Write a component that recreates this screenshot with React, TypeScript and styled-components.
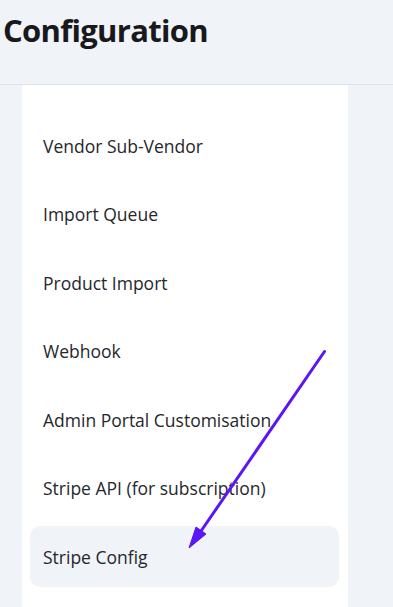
import React from "react";
import styled, { createGlobalStyle } from "styled-components";

const Global = createGlobalStyle`
  html, body { margin: 0; padding: 0; }
  body {
    background: #f0f3f8;
    font-family: "Open Sans", "Noto Sans", sans-serif;
    overflow: hidden;
  }
`;

const Page = styled.div`
  position: relative;
  width: 393px;
  height: 607px;
  overflow: hidden;
  background: #f0f3f8;
`;

const Header = styled.header`
  height: 85px;
  box-sizing: border-box;
  border-bottom: 1px solid #dde2ec;
  padding: 10px 0 0 3px;
`;

const Title = styled.h1`
  margin: 0;
  font-size: 31px;
  line-height: 40px;
  font-weight: 700;
  color: #18191c;
  letter-spacing: -0.7px;
`;

const Body = styled.div`
  padding-left: 22px;
`;

const Card = styled.nav`
  width: 326px;
  height: 600px;
  background: #ffffff;
  box-sizing: border-box;
  padding: 30px 9px 0 8px;
  display: flex;
  flex-direction: column;
  gap: 7.5px;
`;

const Item = styled.div<{ $active?: boolean }>`
  height: 61px;
  border-radius: 10px;
  display: flex;
  align-items: center;
  padding-left: 13px;
  font-size: 17.5px;
  color: #26272b;
  background: ${(p) => (p.$active ? "#f0f3f8" : "transparent")};
`;

const Arrow = styled.svg`
  position: absolute;
  left: 0;
  top: 0;
  pointer-events: none;
`;

const items = [
  "Vendor Sub-Vendor",
  "Import Queue",
  "Product Import",
  "Webhook",
  "Admin Portal Customisation",
  "Stripe API (for subscription)",
  "Stripe Config",
];

export default function App() {
  return (
    <Page>
      <Global />
      <Header>
        <Title>Configuration</Title>
      </Header>
      <Body>
        <Card>
          {items.map((t) => (
            <Item key={t} $active={t === "Stripe Config"}>
              {t}
            </Item>
          ))}
        </Card>
      </Body>
      <Arrow width="393" height="607" viewBox="0 0 393 607">
        <line x1="324.5" y1="351.5" x2="199" y2="534" stroke="#5a16f7" strokeWidth="3" strokeLinecap="round" />
        <polygon points="189,548 196,527 206,534" fill="#5a16f7" stroke="#5a16f7" strokeWidth="1" strokeLinejoin="round" />
      </Arrow>
    </Page>
  );
}
